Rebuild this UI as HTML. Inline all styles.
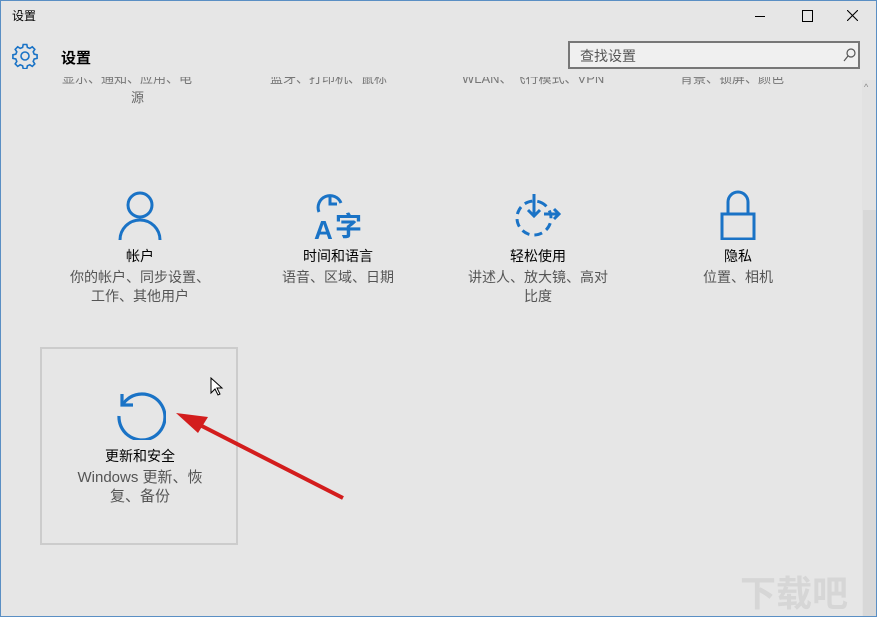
<!DOCTYPE html>
<html><head><meta charset="utf-8"><style>
body{margin:0;width:877px;height:617px;background:#e6e6e6;font-family:"Liberation Sans","Noto Sans CJK SC",sans-serif;position:relative;overflow:hidden}
.win{position:absolute;inset:0;border:1px solid #5a8fc4;box-sizing:border-box}
.t{position:absolute;white-space:nowrap}
.it{position:absolute;width:190px;text-align:center;font-size:14px;color:#000}
.it .d{color:#555;line-height:19px;margin-top:2px}
.it svg{display:block;margin:0 auto 6px}
.clip{position:absolute;left:0;top:77px;width:862px;height:40px;overflow:hidden}
</style></head><body>
<div class="win"></div>
<div class="t" style="left:12px;top:7px;font-size:12px">设置</div>
<div style="position:absolute;left:755px;top:16px;width:10px;height:1px;background:#000"></div>
<div style="position:absolute;left:802px;top:10px;width:9px;height:10px;border:1px solid #000"></div>
<svg style="position:absolute;left:847px;top:10px" width="11" height="11"><path d="M0 0L11 11M11 0L0 11" stroke="#000" stroke-width="1.1"/></svg>
<svg style="position:absolute;left:12px;top:43px" width="26" height="26" viewBox="0 0 26 26"><g fill="none" stroke="#1a73c6" stroke-width="1.6"><circle cx="13" cy="13" r="4"/><path d="M11.2 1.5h3.6l.6 2.9 2.4 1 2.5-1.6 2.5 2.5-1.6 2.5 1 2.4 2.9.6v3.6l-2.9.6-1 2.4 1.6 2.5-2.5 2.5-2.5-1.6-2.4 1-.6 2.9h-3.6l-.6-2.9-2.4-1-2.5 1.6-2.5-2.5 1.6-2.5-1-2.4-2.9-.6v-3.6l2.9-.6 1-2.4-1.6-2.5 2.5-2.5 2.5 1.6 2.4-1z"/></g></svg>
<div class="t" style="left:61px;top:47px;font-size:15px;font-weight:bold">设置</div>
<div style="position:absolute;left:568px;top:41px;width:292px;height:28px;border:2px solid #777;box-sizing:border-box;background:#f0f0f0"></div>
<div class="t" style="left:580px;top:46px;font-size:14px;color:#555">查找设置</div>
<svg style="position:absolute;left:843px;top:47px" width="14" height="16"><circle cx="8" cy="6" r="4" fill="none" stroke="#555" stroke-width="1.2"/><path d="M5 9L1 14" stroke="#555" stroke-width="1.2"/></svg>
<div class="clip">
<div class="t" style="left:62px;top:-9px;font-size:13px;color:#777">显示、通知、应用、电</div>
<div class="t" style="left:131px;top:10px;font-size:13px;color:#666">源</div>
<div class="t" style="left:270px;top:-9px;font-size:13px;color:#777">蓝牙、打印机、鼠标</div>
<div class="t" style="left:462px;top:-9px;font-size:13px;color:#777">WLAN、飞行模式、VPN</div>
<div class="t" style="left:680px;top:-9px;font-size:13px;color:#777">背景、锁屏、颜色</div>
</div>
<div style="position:absolute;left:862px;top:80px;width:14px;height:536px;background:#e2e2e2"></div>
<div class="t" style="left:864px;top:82px;font-size:9px;color:#888">^</div>
<div style="position:absolute;left:863px;top:210px;width:13px;height:406px;background:#d8d8d8"></div>

<div class="it" style="left:45px;top:190px"><svg width="48" height="50" viewBox="0 0 48 50"><g fill="none" stroke="#1a73c6" stroke-width="3"><circle cx="24" cy="15" r="12"/><path d="M4 50a20 20 0 0 1 40 0"/></g></svg>帐户<div class="d">你的帐户、同步设置、<br>工作、其他用户</div></div>
<div class="it" style="left:243px;top:190px"><svg width="56" height="50" viewBox="0 0 56 50"><g fill="none" stroke="#1a73c6" stroke-width="3"><path d="M9 22A11 11 0 1 1 31 13"/><path d="M20 6v8h7"/></g><text x="4" y="49" font-size="26" font-family="Liberation Sans" font-weight="bold" fill="#1a73c6">A</text><text x="25" y="46" font-size="27" font-family="Noto Sans CJK SC" font-weight="bold" fill="#1a73c6">字</text></svg>时间和语言<div class="d">语音、区域、日期</div></div>
<div class="it" style="left:443px;top:190px"><svg width="56" height="50" viewBox="0 0 56 50"><g fill="none" stroke="#1a73c6" stroke-width="3"><circle cx="24" cy="28" r="17" stroke-dasharray="8 5" transform="rotate(-70 24 28)"/><path d="M24 4v22M18 20l6 6 6-6M34 24h14M44 19l5 5-5 5"/></g></svg>轻松使用<div class="d">讲述人、放大镜、高对<br>比度</div></div>
<div class="it" style="left:643px;top:190px"><svg width="48" height="50" viewBox="0 0 48 50"><g fill="none" stroke="#1a73c6" stroke-width="3"><path d="M14 24V12a10 10 0 0 1 20 0v12"/><rect x="8" y="24" width="32" height="25"/></g></svg>隐私<div class="d">位置、相机</div></div>

<div style="position:absolute;left:40px;top:347px;width:198px;height:198px;border:2px solid #ccc;box-sizing:border-box"></div>
<div class="it" style="left:45px;top:388px"><svg width="52" height="52" viewBox="0 0 52 52"><g fill="none" stroke="#1a73c6" stroke-width="3.2"><path d="M9 16A23 23 0 1 1 5 28"/><path d="M8 6v11h11"/></g></svg>更新和安全<div class="d" style="font-size:15px">Windows 更新、恢<br>复、备份</div></div>
<svg style="position:absolute;left:210px;top:377px" width="14" height="20"><path d="M1 1v15l4-4 3 6 2-1-3-6h5z" fill="#fff" stroke="#000"/></svg>
<svg style="position:absolute;left:170px;top:405px" width="180" height="100"><path d="M173 93L26 18" stroke="#d31d1d" stroke-width="4"/><path d="M6 8L38 12 28 28z" fill="#d31d1d"/></svg>
<div class="t" style="left:740px;top:565px;font-size:36px;color:#d6d6d6;font-weight:bold">下载吧</div>
</body></html>
